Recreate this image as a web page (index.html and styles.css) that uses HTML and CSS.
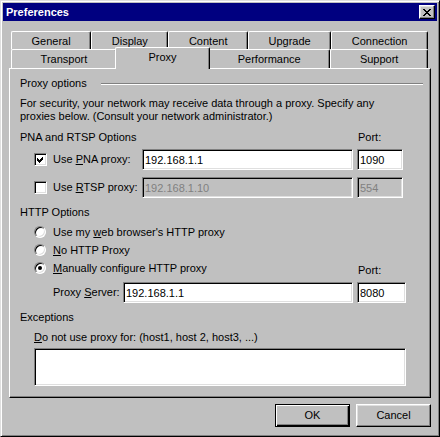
FILE: index.html
```html
<!DOCTYPE html>
<html lang="en">
<head>
  <meta charset="UTF-8">
  <title>Preferences</title>
  <link rel="stylesheet" href="styles.css">
</head>
<body>
  <div class="window">
    <div class="titlebar">
      <span class="title">Preferences</span>
      <span class="close-btn">
        <svg width="8" height="7" viewBox="0 0 8 7" shape-rendering="crispEdges"><path d="M0 0h2l2 2.5 2-2.5h2l-3 3.5 3 3.5h-2l-2-2.5-2 2.5h-2l3-3.5z" fill="#000"/></svg>
      </span>
    </div>

    <div class="dialog">
      <div class="tabs">
        <div class="tab-row back">
          <div class="tab">General</div>
          <div class="tab">Display</div>
          <div class="tab">Content</div>
          <div class="tab">Upgrade</div>
          <div class="tab">Connection</div>
        </div>
        <div class="tab-row front">
          <div class="tab">Transport</div>
          <div class="tab active">Proxy</div>
          <div class="tab">Performance</div>
          <div class="tab">Support</div>
        </div>
      </div>

      <div class="panel">
        <div class="group-title">Proxy options</div>
        <p class="desc">For security, your network may receive data through a proxy. Specify any proxies below. (Consult your network administrator.)</p>

        <div class="section-head">
          <span>PNA and RTSP Options</span>
          <span class="port-label">Port:</span>
        </div>
        <div class="proxy-row">
          <label class="check-label"><span class="checkbox"><svg width="7" height="7" viewBox="0 0 7 7" shape-rendering="crispEdges"><path d="M6 0v3l-4 4-2-2v-3l2 2z" fill="#000"/></svg></span><span>Use <u>P</u>NA proxy:</span></label>
          <input class="text-input" type="text" value="192.168.1.1">
          <input class="text-input port-input" type="text" value="1090">
        </div>
        <div class="proxy-row gap">
          <label class="check-label"><span class="checkbox"></span><span>Use <u>R</u>TSP proxy:</span></label>
          <input class="text-input" type="text" value="192.168.1.10" disabled>
          <input class="text-input port-input" type="text" value="554" disabled>
        </div>

        <div class="section-head">
          <span>HTTP Options</span>
        </div>
        <div class="radio-list">
          <div class="radio-row"><span class="radio"></span><span>Use my <u>w</u>eb browser's HTTP proxy</span></div>
          <div class="radio-row"><span class="radio"></span><span><u>N</u>o HTTP Proxy</span></div>
          <div class="radio-row">
            <span class="radio-item"><span class="radio selected"></span><span><u>M</u>anually configure HTTP proxy</span></span>
            <span class="port-label low">Port:</span>
          </div>
        </div>
        <div class="server-row">
          <label class="server-label">Proxy <u>S</u>erver:</label>
          <input class="text-input" type="text" value="192.168.1.1">
          <input class="text-input port-input wide" type="text" value="8080">
        </div>

        <div class="section-head">
          <span>Exceptions</span>
        </div>
        <div class="except-label"><u>D</u>o not use proxy for: (host1, host 2, host3, ...)</div>
        <textarea class="except-box"></textarea>
      </div>

      <div class="buttons">
        <span class="btn default">OK</span>
        <span class="btn">Cancel</span>
      </div>
    </div>
  </div>
</body>
</html>
```

FILE: styles.css
```css
* {
  box-sizing: border-box;
}
body {
  margin: 0;
  background: #c0c0c0;
  font-family: "Liberation Sans", Arial, sans-serif;
  font-size: 11px;
  line-height: 13px;
  color: #000;
}
.window {
  width: 440px;
  height: 437px;
  display: flex;
  flex-direction: column;
  background: #c0c0c0;
  border: 1px solid;
  border-color: #dfdfdf #000 #000 #dfdfdf;
  box-shadow: inset 1px 1px #fff, inset -1px -1px #808080;
  padding: 2px;
}
.titlebar {
  height: 18px;
  background: #000080;
  display: flex;
  align-items: center;
  justify-content: space-between;
  padding: 0 2px 0 3px;
}
.title {
  color: #fff;
  font-weight: bold;
}
.close-btn {
  width: 16px;
  height: 14px;
  display: flex;
  align-items: center;
  justify-content: center;
  background: #c0c0c0;
  border: 1px solid;
  border-color: #fff #000 #000 #fff;
  box-shadow: inset -1px -1px #808080, inset 1px 1px #dfdfdf;
}
.dialog {
  flex: 1;
  display: flex;
  flex-direction: column;
  padding: 10px 6px 7px 6px;
}

/* tabs */
.tab-row {
  display: flex;
  margin: 0 3px 0 2px;
}
.tab {
  flex: 1 1 auto;
  text-align: center;
  padding: 0 6px;
  height: 18px;
  line-height: 18px;
  background: #c0c0c0;
  border-top: 1px solid #fff;
  border-left: 1px solid #fff;
  border-right: 1px solid #000;
  border-top-left-radius: 2px;
  border-top-right-radius: 2px;
  box-shadow: inset -1px 0 #808080;
  white-space: nowrap;
}
.front .tab {
  height: 19px;
}
.tab.active {
  position: relative;
  z-index: 1;
  height: 22px;
  padding: 0 10px;
  margin: -2px -2px -1px;
}

/* panel */
.panel {
  flex: 1;
  border: 1px solid;
  border-color: #fff #000 #000 #fff;
  box-shadow: inset -1px -1px #808080;
  padding: 8px 24px 0 10px;
}
.group-title {
  display: flex;
  align-items: center;
  gap: 14px;
  margin-right: -17px;
}
.group-title::after {
  content: "";
  flex: 1;
  border-top: 1px solid #808080;
  border-bottom: 1px solid #fff;
}
.desc {
  margin: 7px 0 0;
}
.section-head {
  display: flex;
  justify-content: space-between;
  margin-top: 8px;
}
.port-label {
  width: 49px;
  padding-left: 1px;
}
.proxy-row {
  display: flex;
  align-items: center;
  margin: 5px 0 0 14px;
}
.proxy-row.gap {
  margin-top: 7px;
}
.check-label {
  flex: 0 0 108px;
  display: flex;
  align-items: center;
  gap: 6px;
  white-space: nowrap;
}
.checkbox {
  width: 13px;
  height: 13px;
  display: flex;
  align-items: center;
  justify-content: center;
  background: #fff;
  border: 1px solid;
  border-color: #808080 #fff #fff #808080;
  box-shadow: inset 1px 1px #000, inset -1px -1px #dfdfdf;
}
.text-input {
  flex: 1;
  min-width: 0;
  height: 21px;
  margin: 0;
  padding: 0 2px;
  font: inherit;
  color: #000;
  background: #fff;
  border: 1px solid;
  border-color: #808080 #fff #fff #808080;
  box-shadow: inset 1px 1px #000, inset -1px -1px #dfdfdf;
  outline: none;
}
.text-input:disabled {
  background: #c0c0c0;
  color: #808080;
  -webkit-text-fill-color: #808080;
}
.port-input {
  flex: 0 0 46px;
  margin: 0 3px 0 4px;
}
.port-input.wide {
  flex-basis: 49px;
  margin-right: 0;
}
.radio-list {
  margin: 4px 0 0 14px;
}
.radio-row {
  height: 18px;
  display: flex;
  align-items: center;
  gap: 7px;
  white-space: nowrap;
}
.radio-row:last-child {
  justify-content: space-between;
}
.radio-item {
  display: flex;
  align-items: center;
  gap: 7px;
}
.radio {
  width: 12px;
  height: 12px;
  border-radius: 50%;
  display: flex;
  align-items: center;
  justify-content: center;
  background: #fff;
  border: 1px solid;
  border-color: #808080 #fff #fff #808080;
  box-shadow: inset 1px 1px #000, inset -1px -1px #dfdfdf;
}
.radio.selected::after {
  content: "";
  width: 4px;
  height: 4px;
  border-radius: 50%;
  background: #000;
}
.port-label.low {
  align-self: flex-end;
}
.server-row {
  display: flex;
  align-items: center;
  margin: 5px 0 0 33px;
}
.server-label {
  flex: 0 0 70px;
  white-space: nowrap;
}
.except-label {
  margin: 7px 0 0 14px;
}
.except-box {
  display: block;
  width: calc(100% - 14px);
  height: 38px;
  margin: 4px 0 0 14px;
  resize: none;
  background: #fff;
  border: 1px solid;
  border-color: #808080 #fff #fff #808080;
  box-shadow: inset 1px 1px #000, inset -1px -1px #dfdfdf;
  outline: none;
}

/* buttons */
.buttons {
  display: flex;
  justify-content: flex-end;
  gap: 6px;
  margin-top: 6px;
}
.btn {
  width: 75px;
  height: 23px;
  display: flex;
  align-items: center;
  justify-content: center;
  border: 1px solid;
  border-color: #fff #000 #000 #fff;
  box-shadow: inset -1px -1px #808080, inset 1px 1px #dfdfdf;
}
.btn.default {
  border-color: #000;
  box-shadow: inset 1px 1px #fff, inset -1px -1px #000, inset -2px -2px #808080;
}
```
